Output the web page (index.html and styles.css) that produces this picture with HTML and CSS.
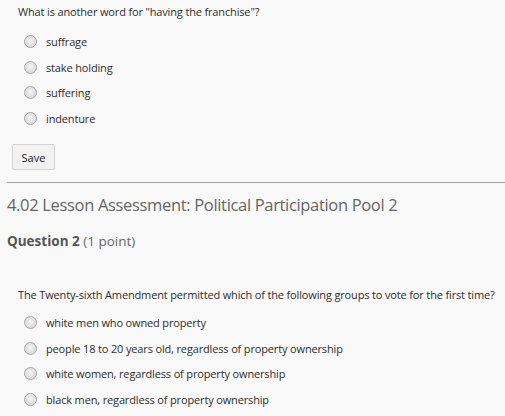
FILE: index.html
```html
<!DOCTYPE html>
<html>
<head>
<meta charset="utf-8">
<link rel="stylesheet" href="styles.css">
</head>
<body>
<div class="page">
  <section class="question first">
    <p class="prompt">What is another word for "having the franchise"?</p>
    <ul class="options">
      <li><span class="radio"></span><span>suffrage</span></li>
      <li><span class="radio"></span><span>stake holding</span></li>
      <li><span class="radio"></span><span>suffering</span></li>
      <li><span class="radio"></span><span>indenture</span></li>
    </ul>
    <button class="save">Save</button>
  </section>
  <hr class="divider">
  <h1 class="title">4.02 Lesson Assessment: Political Participation Pool 2</h1>
  <h2 class="qhead"><strong>Question 2</strong> (1 point)</h2>
  <section class="question second">
    <p class="prompt">The Twenty-sixth Amendment permitted which of the following groups to vote for the first time?</p>
    <ul class="options">
      <li><span class="radio"></span><span>white men who owned property</span></li>
      <li><span class="radio"></span><span>people 18 to 20 years old, regardless of property ownership</span></li>
      <li><span class="radio"></span><span>white women, regardless of property ownership</span></li>
      <li><span class="radio"></span><span>black men, regardless of property ownership</span></li>
    </ul>
  </section>
</div>
</body>
</html>
```
FILE: styles.css
```css
html, body {
  margin: 0;
  padding: 0;
  background: #f9f9f9;
}
body {
  font-family: "Open Sans", "Noto Sans", sans-serif;
  color: #2e2e2e;
  font-size: 11px;
}
.page {
  padding: 4px 0 0 7px;
}
.question {
  padding-left: 11px;
}
.prompt {
  margin: 0;
  line-height: 16px;
  letter-spacing: -0.15px;
}
.options {
  list-style: none;
  margin: 0;
  padding: 9px 0 0 6px;
}
.options li {
  display: flex;
  align-items: center;
  gap: 9px;
  height: 25.5px;
  letter-spacing: -0.15px;
}
.radio {
  width: 11px;
  height: 11px;
  border-radius: 50%;
  border: 1px solid #a4a4a4;
  background: radial-gradient(circle at 50% 45%, #f6f6f6 0%, #e4e4e4 45%, #cdcdcd 85%, #bdbdbd 100%);
  box-shadow: inset 0 0 1px #fff;
  flex: none;
}
.save {
  margin: 13px 0 0 -6px;
  width: 43px;
  height: 26px;
  padding: 0;
  border: 1px solid #d4d4d4;
  border-radius: 2px;
  background: #f2f2f2;
  font-family: inherit;
  font-size: 11px;
  color: #222;
}
.divider {
  margin: 12px 0 0 0;
  border: 0;
  border-top: 1px solid #9e9e9e;
}
.title {
  margin: 10px 0 0 0;
  font-size: 16.5px;
  letter-spacing: -0.33px;
  font-weight: normal;
  color: #666;
  line-height: 24px;
}
.qhead {
  margin: 14px 0 0 0;
  font-size: 13.5px;
  font-weight: normal;
  color: #666;
  line-height: 20px;
}
.qhead strong {
  font-weight: bold;
  color: #555;
}
.second {
  margin-top: 36px;
}
.second .options {
  padding-top: 7px;
}
```
